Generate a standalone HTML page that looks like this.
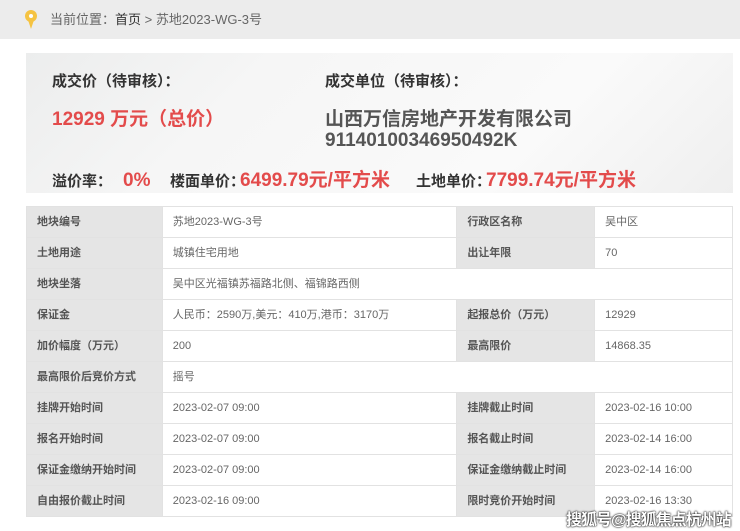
<!DOCTYPE html>
<html><head><meta charset="utf-8"><style>
*{margin:0;padding:0;box-sizing:border-box}
body{width:740px;height:531px;overflow:hidden;background:#fff;font-family:"Liberation Sans","Noto Sans CJK SC",sans-serif;position:relative}
.top{position:absolute;left:0;top:0;width:740px;height:39px;background:#ececec;font-size:13px;color:#666;line-height:39px;padding-left:50px}
.top b{font-weight:normal;color:#333}
.pin{position:absolute;left:25px;top:10px}
.card{position:absolute;left:26px;top:53px;width:707px;height:140px;background:linear-gradient(135deg,#eceded 0%,#f6f6f6 30%,#fafafa 70%,#efefef 100%);overflow:hidden}
.t{position:absolute;white-space:nowrap;font-weight:bold}
.lab{font-size:15px;color:#333}
.red{font-size:19px;color:#e34b4b}
.co{font-size:19px;color:#555}
.row{position:absolute;left:26px;top:112px;display:flex;align-items:baseline;white-space:nowrap;font-weight:bold}
.row span{display:inline-block}
table{position:absolute;left:26px;top:206px;width:707px;border-collapse:collapse;font-size:11px;line-height:14px}
td{height:31px;border:1px solid #e2e2e2;padding:0 0 0 10px;color:#666;vertical-align:middle}
td.l{background:#e5e5e5;color:#555;font-weight:bold}
.wm{position:absolute;left:566px;top:506px;font-size:16px;font-weight:bold;color:#fff;white-space:nowrap;text-shadow:0 0 2px #000,0 0 1px #000;letter-spacing:-1px}
</style></head><body>
<div class="top"><svg class="pin" width="12" height="19" viewBox="0 0 12 19"><circle cx="6" cy="6" r="6" fill="#f5c342"/><circle cx="6" cy="6" r="2" fill="#fff"/><path d="M3 10 L6 19 L9 10Z" fill="#f5c342"/></svg>当前位置：<b>首页</b> &gt; 苏地2023-WG-3号</div>
<div class="card">
<div class="t lab" style="left:26px;top:17px">成交价（待审核）：</div>
<div class="t red" style="left:26px;top:51px">12929 万元（总价）</div>
<div class="t lab" style="left:299px;top:17px">成交单位（待审核）：</div>
<div class="t co" style="left:299px;top:51px">山西万信房地产开发有限公司</div>
<div class="t co" style="left:299px;top:77px">91140100346950492K</div>
<div class="row">
<span class="lab" style="width:71px">溢价率：</span>
<span class="red" style="width:47px">0%</span>
<span class="lab" style="width:70px">楼面单价：</span>
<span class="red" style="width:176px">6499.79元/平方米</span>
<span class="lab" style="width:70px">土地单价：</span>
<span class="red">7799.74元/平方米</span>
</div>
</div>
<table>
<colgroup><col style="width:136px"><col style="width:295px"><col style="width:138px"><col style="width:138px"></colgroup>
<tr><td class="l">地块编号</td><td>苏地2023-WG-3号</td><td class="l">行政区名称</td><td>吴中区</td></tr>
<tr><td class="l">土地用途</td><td>城镇住宅用地</td><td class="l">出让年限</td><td>70</td></tr>
<tr><td class="l">地块坐落</td><td colspan="3">吴中区光福镇苏福路北侧、福锦路西侧</td></tr>
<tr><td class="l">保证金</td><td>人民币：2590万,美元：410万,港币：3170万</td><td class="l">起报总价（万元）</td><td>12929</td></tr>
<tr><td class="l">加价幅度（万元）</td><td>200</td><td class="l">最高限价</td><td>14868.35</td></tr>
<tr><td class="l">最高限价后竞价方式</td><td colspan="3">摇号</td></tr>
<tr><td class="l">挂牌开始时间</td><td>2023-02-07 09:00</td><td class="l">挂牌截止时间</td><td>2023-02-16 10:00</td></tr>
<tr><td class="l">报名开始时间</td><td>2023-02-07 09:00</td><td class="l">报名截止时间</td><td>2023-02-14 16:00</td></tr>
<tr><td class="l">保证金缴纳开始时间</td><td>2023-02-07 09:00</td><td class="l">保证金缴纳截止时间</td><td>2023-02-14 16:00</td></tr>
<tr><td class="l">自由报价截止时间</td><td>2023-02-16 09:00</td><td class="l">限时竞价开始时间</td><td>2023-02-16 13:30</td></tr>
</table>
<div class="wm">搜狐号@搜狐焦点杭州站</div>
</body></html>
